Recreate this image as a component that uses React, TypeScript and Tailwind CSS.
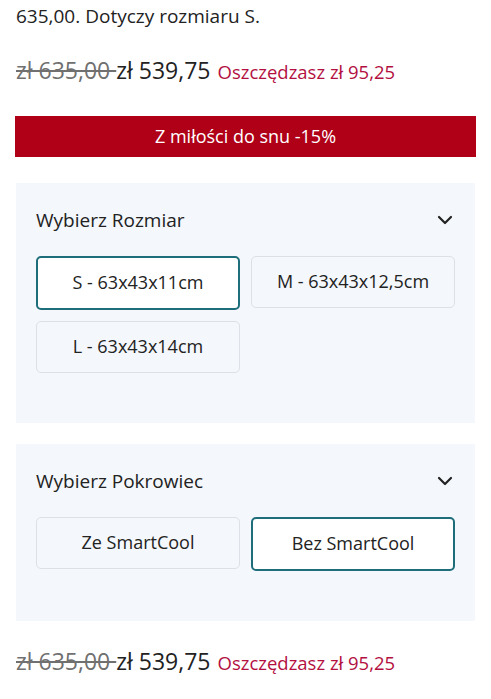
import { useState } from 'react';

const font = { fontFamily: '"Open Sans", "Noto Sans", Arial, sans-serif' };

function Chevron() {
  return (
    <svg width="16" height="10" viewBox="0 0 16 10" fill="none">
      <path d="M2 2l6 6 6-6" stroke="#222" strokeWidth="2.2" strokeLinecap="round" strokeLinejoin="round" />
    </svg>
  );
}

function PriceRow() {
  return (
    <div className="flex items-baseline px-4 leading-none">
      <span className="text-[23px] text-[#707070] line-through decoration-[#707070]">zł 635,00&nbsp;</span>
      <span className="text-[23px] font-medium text-[#222]">zł 539,75</span>
      <span className="ml-[7px] text-[18.5px] font-medium text-[#b3103f]">Oszczędzasz zł 95,25</span>
    </div>
  );
}

function Option({ label, active, onClick }: { label: string; active: boolean; onClick: () => void }) {
  return (
    <button
      onClick={onClick}
      className={
        active
          ? 'h-[54px] rounded-[5px] border-2 border-[#1e6d7b] bg-white text-[18px] text-[#222]'
          : 'h-[52px] rounded-[5px] border border-[#dde1e7] bg-[#f4f7fb] text-[18px] text-[#222]'
      }
    >
      {label}
    </button>
  );
}

function Panel({ title, options, selected, onSelect, extra }: {
  title: string;
  options: string[];
  selected: number;
  onSelect: (i: number) => void;
  extra: string;
}) {
  return (
    <div className={`mx-4 bg-[#f4f7fb] px-5 ${extra}`}>
      <div className="flex items-center justify-between pr-[2px] pt-[23px]">
        <span className="text-[19px] text-[#222]">{title}</span>
        <Chevron />
      </div>
      <div className="mt-[21px] grid grid-cols-2 items-start gap-x-[11px] gap-y-[11px]">
        {options.map((o, i) => (
          <Option key={o} label={o} active={i === selected} onClick={() => onSelect(i)} />
        ))}
      </div>
    </div>
  );
}

export default function App() {
  const [size, setSize] = useState(0);
  const [cover, setCover] = useState(1);

  return (
    <div className="min-h-[699px] w-[491px] bg-white pt-[3px]" style={font}>
      <p className="px-4 text-[19px] leading-[26px] text-[#222]">635,00. Dotyczy rozmiaru S.</p>

      <div className="mt-[30px]">
        <PriceRow />
      </div>

      <div className="mx-[15px] mt-[34px] flex h-[41px] items-center justify-center bg-[#b00017] text-[18px] text-white">
        Z miłości do snu -15%
      </div>

      <Panel
        title="Wybierz Rozmiar"
        options={['S - 63x43x11cm', 'M - 63x43x12,5cm', 'L - 63x43x14cm']}
        selected={size}
        onSelect={setSize}
        extra="mt-[26px] h-[240px]"
      />

      <Panel
        title="Wybierz Pokrowiec"
        options={['Ze SmartCool', 'Bez SmartCool']}
        selected={cover}
        onSelect={setCover}
        extra="mt-[21px] h-[177px]"
      />

      <div className="mt-[29px]">
        <PriceRow />
      </div>
    </div>
  );
}
